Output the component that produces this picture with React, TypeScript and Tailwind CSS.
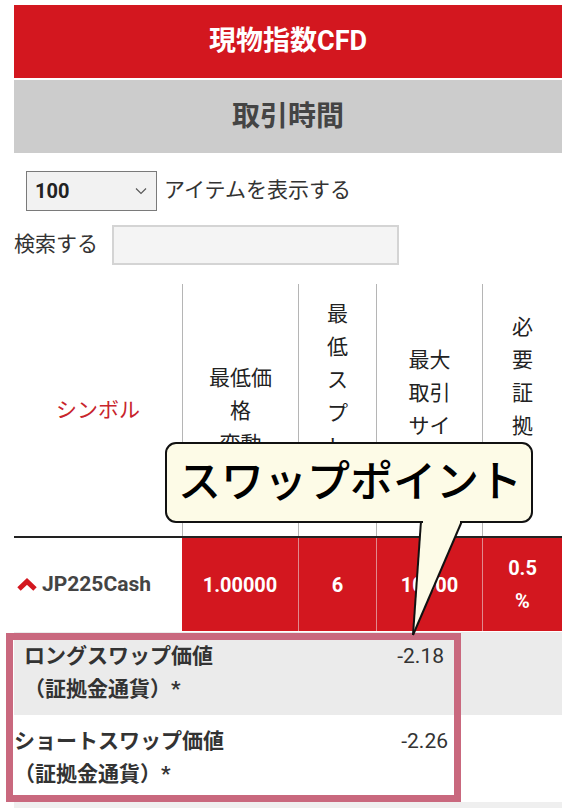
import React from "react";

const font = { fontFamily: "Roboto, 'Noto Sans CJK JP', 'Noto Sans', sans-serif" };

function Lines({ lines }: { lines: string[] }) {
  return (
    <div className="flex flex-col items-center leading-[33px]">
      {lines.map((l, i) => (
        <span key={i}>{l}</span>
      ))}
    </div>
  );
}

export default function App() {
  return (
    <div
      className="relative w-[576px] h-[808px] overflow-hidden bg-white px-[14px] pt-[5px] text-[#222]"
      style={font}
    >
      {/* Title bars */}
      <div className="flex h-[73px] items-center justify-center bg-[#d3171f] text-[27px] font-bold text-white">
        現物指数CFD
      </div>
      <div className="mt-[2px] flex h-[73px] items-center justify-center bg-[#cccccc] text-[28px] font-bold text-[#444]">
        取引時間
      </div>

      {/* Controls */}
      <div className="mt-[18px] flex items-center pl-[12px]">
        <div className="flex h-[40px] w-[131px] items-center justify-between border border-[#7a7a7a] bg-[#f2f2f2] pl-[8px] pr-[9px]">
          <span className="text-[20px] font-bold text-[#222]">100</span>
          <svg width="12" height="8" viewBox="0 0 12 8">
            <polyline points="1,1.5 6,6.5 11,1.5" fill="none" stroke="#555" strokeWidth="1.1" />
          </svg>
        </div>
        <span className="ml-[7px] text-[21px] text-[#333]">アイテムを表示する</span>
      </div>
      <div className="mt-[14px] flex items-center">
        <span className="w-[98px] text-[21px] text-[#333]">検索する</span>
        <div className="h-[40px] w-[287px] border-2 border-[#d4d4d4] bg-[#f4f4f4]" />
      </div>

      {/* Table header */}
      <div className="mt-[19px] grid h-[254px] grid-cols-[168px_116px_78px_106px_80px] border-b-2 border-[#222] text-[21px]">
        <div className="flex items-center justify-center pt-[2px] text-[#c8242c]">シンボル</div>
        <div className="flex items-center justify-center border-l border-[#b5b5b5] pt-[2px]">
          <Lines lines={["最低価", "格", "変動"]} />
        </div>
        <div className="flex items-center justify-center border-l border-[#b5b5b5] pt-[6px]">
          <Lines lines={["最", "低", "ス", "プ", "レ", "ッ", "ド"]} />
        </div>
        <div className="flex items-center justify-center border-l border-[#b5b5b5]">
          <Lines lines={["最大", "取引", "サイ", "ズ"]} />
        </div>
        <div className="flex items-center justify-center border-l border-[#b5b5b5]">
          <Lines lines={["必", "要", "証", "拠", "金", "率"]} />
        </div>
      </div>

      {/* Data row */}
      <div className="grid h-[93px] grid-cols-[168px_116px_78px_106px_80px] text-[20px] font-bold">
        <div className="flex items-center pl-[3px] text-[21px] text-[#444]">
          <svg width="20" height="13" viewBox="0 0 20 13" className="mr-[5px]">
            <polyline points="2,11 10,3.5 18,11" fill="none" stroke="#d3171f" strokeWidth="5" />
          </svg>
          JP225Cash
        </div>
        <div className="flex items-center justify-center bg-[#d3171f] text-white">1.00000</div>
        <div className="flex items-center justify-center border-l border-[#e08a8e] bg-[#d3171f] text-white">6</div>
        <div className="flex items-center justify-center border-l border-[#e08a8e] bg-[#d3171f] text-white">10000</div>
        <div className="flex items-center justify-center border-l border-[#e08a8e] bg-[#d3171f] text-white">
          <Lines lines={["0.5", "%"]} />
        </div>
      </div>

      {/* Detail rows */}
      <div className="mt-[1px] flex h-[83px] bg-[#ebebeb] pt-[8px] text-[21px] leading-[33px]">
        <div className="w-[330px] pl-[10px] font-bold text-[#333]">
          <div>ロングスワップ価値</div>
          <div>（証拠金通貨）*</div>
        </div>
        <div className="w-[100px] text-right text-[#333]">-2.18</div>
      </div>
      <div className="flex h-[87px] bg-white pt-[10px] text-[21px] leading-[33px]">
        <div className="w-[330px] font-bold text-[#333]">
          <div>ショートスワップ価値</div>
          <div>（証拠金通貨）*</div>
        </div>
        <div className="w-[104px] text-right text-[#333]">-2.26</div>
      </div>
      <div className="h-[20px] bg-[#efefef]" />

      {/* Highlight frame */}
      <div className="absolute left-[6px] top-[633px] h-[169px] w-[455px] border-[7px] border-[#c9687e]" />

      {/* Callout tail */}
      <svg
        className="absolute left-0 top-0"
        width="576"
        height="808"
        viewBox="0 0 576 808"
        style={{ pointerEvents: "none" }}
      >
        <polygon points="421,520 462,520 413,635" fill="#fdfbe7" />
        <line x1="421" y1="521" x2="413" y2="635" stroke="#111" strokeWidth="2" />
        <line x1="462" y1="521" x2="413" y2="635" stroke="#111" strokeWidth="2" />
      </svg>

      {/* Callout box */}
      <div className="absolute left-[165px] top-[442px] flex h-[81px] w-[368px] items-center justify-center rounded-[11px] border-2 border-[#111] bg-[#fdfbe7] pl-[2px] text-[43px] font-medium text-black">
        スワップポイント
      </div>
      {/* cover the tail top edge under box */}
      <div className="absolute left-[423px] top-[519px] h-[4px] w-[37px] bg-[#fdfbe7]" />
    </div>
  );
}
